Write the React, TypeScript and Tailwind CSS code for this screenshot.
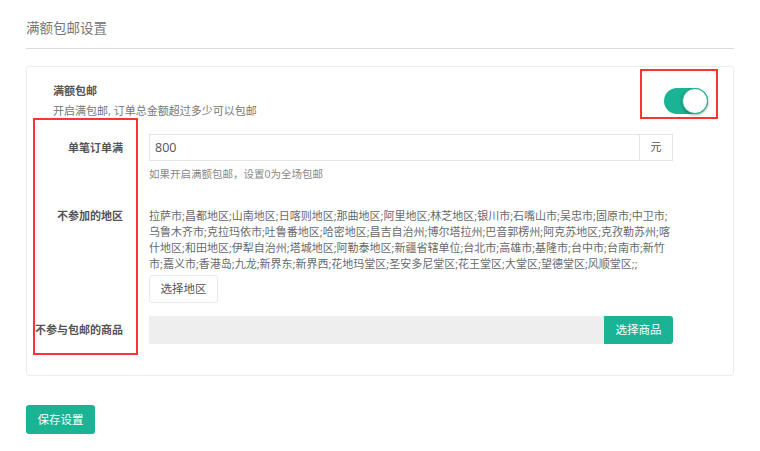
const regions =
  '拉萨市;昌都地区;山南地区;日喀则地区;那曲地区;阿里地区;林芝地区;银川市;石嘴山市;吴忠市;固原市;中卫市;乌鲁木齐市;克拉玛依市;吐鲁番地区;哈密地区;昌吉自治州;博尔塔拉州;巴音郭楞州;阿克苏地区;克孜勒苏州;喀什地区;和田地区;伊犁自治州;塔城地区;阿勒泰地区;新疆省辖单位;台北市;高雄市;基隆市;台中市;台南市;新竹市;嘉义市;香港岛;九龙;新界东;新界西;花地玛堂区;圣安多尼堂区;花王堂区;大堂区;望德堂区;风顺堂区;;'

function Toggle({ on }: { on: boolean }) {
  return (
    <div
      className={
        on
          ? 'relative h-[26px] w-[44px] rounded-full bg-[#1ab394]'
          : 'relative h-[26px] w-[44px] rounded-full border border-[#dfdfdf] bg-white'
      }
    >
      <div className="absolute right-0 top-0 h-[26px] w-[26px] rounded-full border border-[#1ab394] bg-white shadow-[0_1px_3px_rgba(0,0,0,0.35)]" />
    </div>
  )
}

export default function App() {
  return (
    <div
      className="h-[451px] w-[760px] overflow-hidden bg-white px-[26px] text-[#676a6c]"
      style={{ fontFamily: '"Open Sans", "Noto Sans CJK SC", sans-serif' }}
    >
      {/* page title */}
      <div className="border-b border-[#dcdcdc] pb-[11px] pt-[19px] text-[13.5px] leading-[18px] text-[#777]">
        满额包邮设置
      </div>

      {/* settings card */}
      <div className="relative mt-[17px] h-[310px] rounded-[3px] border border-[#ececec] pl-[26px] pr-[25px]">
        <div className="flex items-start justify-between pt-[14px]">
          <div>
            <div className="text-[11px] font-bold leading-[20px] text-[#555]">满额包邮</div>
            <div className="text-[11px] leading-[20px] text-[#777]">开启满包邮, 订单总金额超过多少可以包邮</div>
          </div>
          <div className="pt-[7px]">
            <Toggle on />
          </div>
        </div>

        <div className="mt-[13px] flex flex-col">
          {/* row: 单笔订单满 */}
          <div className="flex">
            <div className="-ml-[26px] w-[96px] shrink-0 text-right text-[11px] font-bold leading-[27px] text-[#555]">
              单笔订单满
            </div>
            <div className="ml-[26px] w-[524px]">
              <div className="flex h-[27px]">
                <input
                  readOnly
                  value="800"
                  className="h-[27px] flex-1 border border-[#e5e6e7] px-[5px] text-[12.5px] text-[#555] outline-none"
                />
                <div className="flex h-[27px] w-[33px] items-center justify-center border border-l-0 border-[#e5e6e7] text-[11px] text-[#555]">
                  元
                </div>
              </div>
              <div className="mt-[6px] text-[10.5px] leading-[14px] text-[#888]">如果开启满额包邮，设置0为全场包邮</div>
            </div>
          </div>

          {/* row: 不参加的地区 */}
          <div className="mt-[27px] flex">
            <div className="-ml-[26px] w-[96px] shrink-0 text-right text-[11px] font-bold leading-[16px] text-[#555]">
              不参加的地区
            </div>
            <div className="ml-[26px] w-[524px]">
              <div className="break-all text-[11px] leading-[16px] text-[#676a6c]">{regions}</div>
              <button className="mt-[3px] h-[28px] w-[69px] rounded-[3px] border border-[#e7eaec] bg-white text-[11.5px] text-[#555]">
                选择地区
              </button>
            </div>
          </div>

          {/* row: 不参与包邮的商品 */}
          <div className="mt-[13px] flex items-center">
            <div className="-ml-[26px] w-[96px] shrink-0 whitespace-nowrap text-right text-[11px] font-bold leading-[28px] text-[#555]">
              不参与包邮的商品
            </div>
            <div className="ml-[26px] flex h-[28px] w-[524px]">
              <div className="flex-1 bg-[#eeeeee]" />
              <button className="h-[28px] w-[69px] rounded-r-[3px] bg-[#1ab394] text-[11.5px] text-white">选择商品</button>
            </div>
          </div>
        </div>
      </div>

      <button className="mt-[29px] h-[29px] w-[69px] rounded-[3px] bg-[#1ab394] text-[11.5px] text-white">保存设置</button>

      {/* red annotation boxes */}
      <div className="pointer-events-none absolute left-[640px] top-[69px] h-[50px] w-[78px] border-2 border-[#f33]" />
      <div className="pointer-events-none absolute left-[33px] top-[118px] h-[237px] w-[105px] border-2 border-[#f33]" />
    </div>
  )
}
